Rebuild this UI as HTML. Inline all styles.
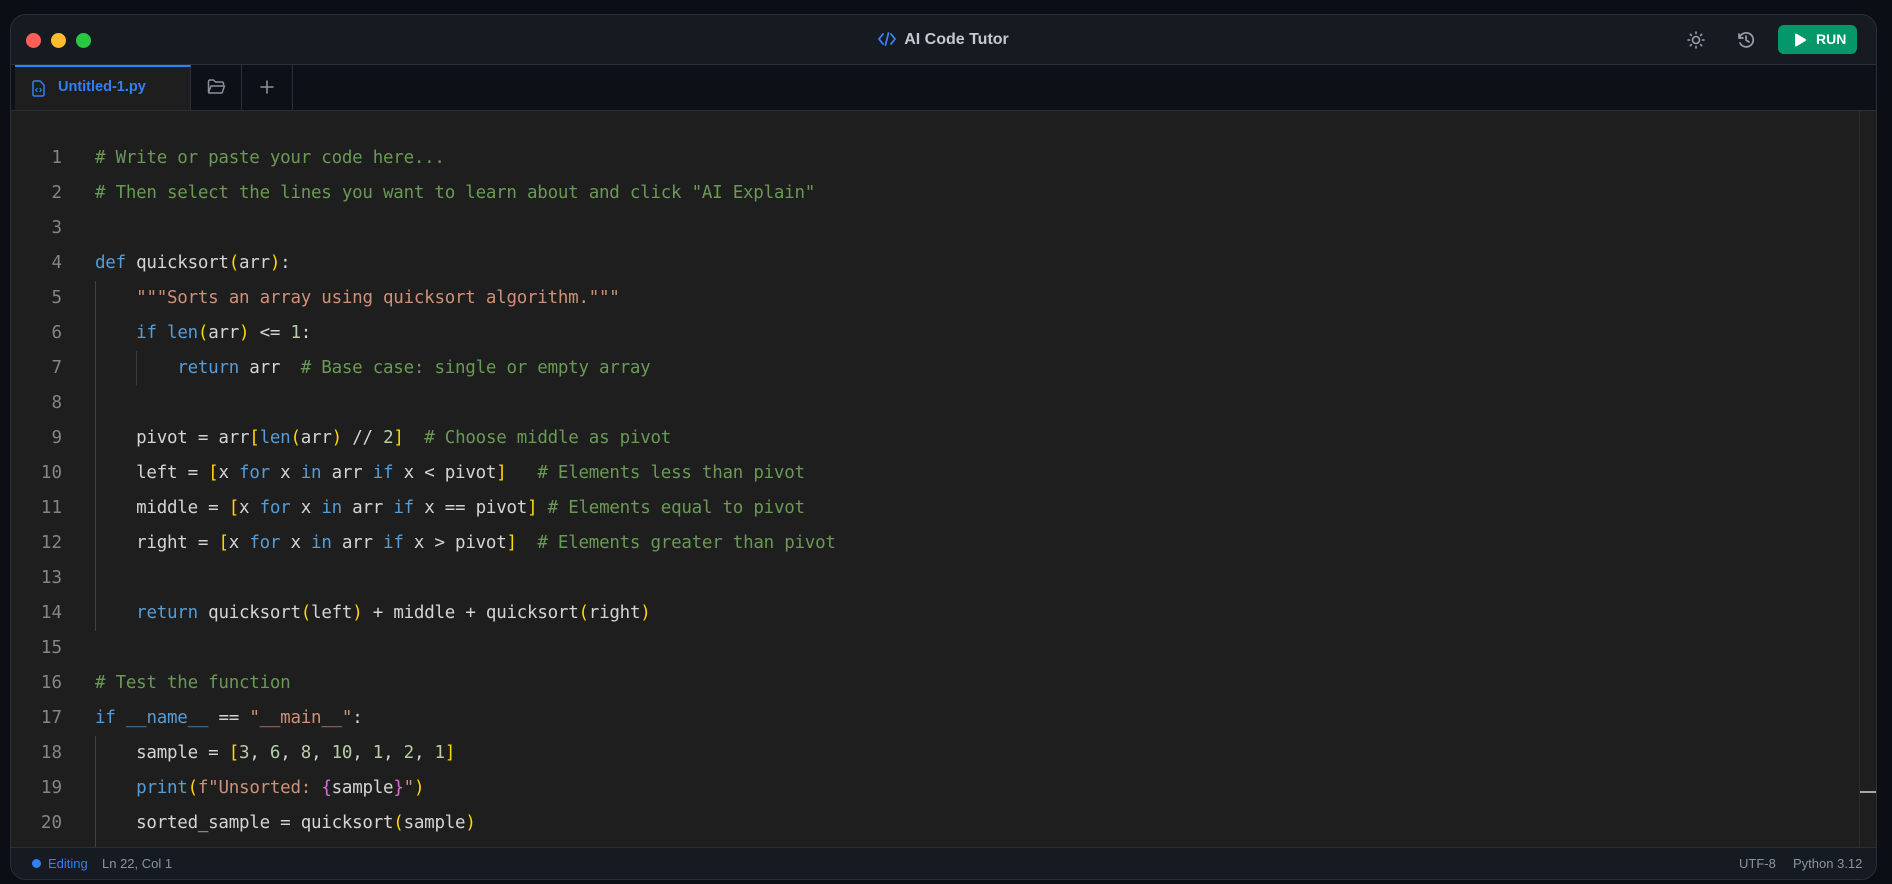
<!DOCTYPE html>
<html><head><meta charset="utf-8"><style>
*{margin:0;padding:0;box-sizing:border-box}
html,body{width:1892px;height:884px;background:#0b0e14;overflow:hidden;font-family:"Liberation Sans",sans-serif}
.win{position:absolute;left:10px;top:14px;width:1867px;height:866px;border:1px solid #2a3038;border-radius:16px;overflow:hidden;background:#161a21}
.title{position:absolute;left:0;top:0;right:0;height:50px;background:#161a21;border-bottom:1px solid #2a3038}
.dot{position:absolute;top:18px;width:15px;height:15px;border-radius:50%}
.tt{position:absolute;left:0;right:0;top:16px;text-align:center;color:#c4c9d0;font-weight:bold;font-size:16px}
.tabs{position:absolute;left:0;top:50px;right:0;height:46px;background:#0d1016;border-bottom:1px solid #2a3038}
.tab{position:absolute;top:0;height:45px;border-right:1px solid #2a3038}
.ed{position:absolute;left:0;top:96px;right:0;height:738px;background:#1e1e1e;overflow:hidden}
.ln{position:absolute;left:0;width:51px;text-align:right;color:#858585;font-family:"DejaVu Sans Mono","Liberation Mono",monospace;font-size:17.5px;line-height:35px}
.code{position:absolute;left:84px;font-family:"DejaVu Sans Mono","Liberation Mono",monospace;font-size:17.5px;line-height:35px;color:#d4d4d4;white-space:pre;letter-spacing:-0.25px}
.c{color:#6a9955}.k{color:#569cd6}.s{color:#ce9178}.b{color:#ffd700}.n{color:#b5cea8}.p{color:#da70d6}
.guide{position:absolute;width:1px;background:#404040}
.status{position:absolute;left:0;right:0;bottom:0;height:32px;background:#161a21;border-top:1px solid #2a3038;font-size:13px;color:#8b949e}
</style></head><body>
<div class="win">
 <div class="title">
  <div class="dot" style="left:15px;background:#fe5f57"></div>
  <div class="dot" style="left:40px;background:#febc2e"></div>
  <div class="dot" style="left:65px;background:#28c840"></div>
  <div class="tt"><svg width="18" height="14" viewBox="0 0 18 14" style="vertical-align:-2px;margin-right:8px"><path d="M5 2L1 7l4 5M13 2l4 5-4 5M10.5 1l-3 12" stroke="#3b82f6" stroke-width="1.8" fill="none" stroke-linecap="round" stroke-linejoin="round"/></svg>AI Code Tutor</div>
  <svg style="position:absolute;left:1675px;top:15px" width="20" height="20" viewBox="0 0 20 20" fill="none" stroke="#9aa0a8" stroke-width="1.6" stroke-linecap="round"><circle cx="10" cy="10" r="3.5"/><path d="M10 2v1.5M10 16.5V18M2 10h1.5M16.5 10H18M4.3 4.3l1.1 1.1M14.6 14.6l1.1 1.1M4.3 15.7l1.1-1.1M14.6 5.4l1.1-1.1"/></svg>
  <svg style="position:absolute;left:1725px;top:15px" width="20" height="20" viewBox="0 0 20 20" fill="none" stroke="#9aa0a8" stroke-width="1.7" stroke-linecap="round" stroke-linejoin="round"><path d="M3.5 8A7 7 0 1 1 4 13"/><path d="M3 4v4h4"/><path d="M10 6v4l3 2"/></svg>
  <div style="position:absolute;left:1767px;top:10px;width:79px;height:29px;background:#059669;border-radius:6px;color:#fff;font-weight:bold;font-size:14px;line-height:29px"><svg style="position:absolute;left:16px;top:8px" width="12" height="14" viewBox="0 0 12 14"><path d="M1 1.5v11a1 1 0 0 0 1.5.9l9-5.5a1 1 0 0 0 0-1.8l-9-5.5A1 1 0 0 0 1 1.5z" fill="#fff"/></svg><span style="position:absolute;left:38px">RUN</span></div>
 </div>
 <div class="tabs">
  <div class="tab" style="left:4px;width:176px;background:#1e1e1e;border-top:2px solid #2f81f7">
   <svg style="position:absolute;left:17px;top:13px" width="13" height="17" viewBox="0 0 13 17" fill="none" stroke="#2f81f7" stroke-width="1.5" stroke-linejoin="round"><path d="M1 2.5a1.5 1.5 0 0 1 1.5-1.5H8l4 4v9.5a1.5 1.5 0 0 1-1.5 1.5h-8A1.5 1.5 0 0 1 1 14.5z"/><path d="M5 8.5l-1.3 1.5L5 11.5M8 8.5l1.3 1.5L8 11.5" stroke-width="1.2" stroke-linecap="round"/></svg>
   <span style="position:absolute;left:43px;top:12px;color:#2f81f7;font-weight:bold;font-size:14.5px">Untitled-1.py</span>
  </div>
  <div class="tab" style="left:180px;width:51px"><svg style="position:absolute;left:16px;top:14px" width="19" height="16" viewBox="0 0 19 16" fill="none" stroke="#8b9098" stroke-width="1.5" stroke-linejoin="round"><path d="M1.5 13V2.5A1.5 1.5 0 0 1 3 1h3.5l2 2H15a1.5 1.5 0 0 1 1.5 1.5V6"/><path d="M1.5 13.5L4 7h13.5L15 14H2z"/></svg></div>
  <div class="tab" style="left:231px;width:51px"><svg style="position:absolute;left:18px;top:15px" width="14" height="14" viewBox="0 0 14 14" stroke="#8b9098" stroke-width="1.6" stroke-linecap="round"><path d="M7 1v12M1 7h12"/></svg></div>
 </div>
 <div class="ed">
  <div class="guide" style="left:84px;top:170px;height:350px"></div>
  <div class="guide" style="left:125px;top:240px;height:35px;background:#3a3a3a"></div>
  <div class="guide" style="left:84px;top:625px;height:120px"></div>
  <div style="position:absolute;left:1848px;top:0;bottom:0;width:1px;background:#2e2e2e"></div>
  <div style="position:absolute;left:1849px;top:680px;width:16px;height:2px;background:#a8a8a8"></div>
  <div class="ln" style="top:30px">1<br>2<br>3<br>4<br>5<br>6<br>7<br>8<br>9<br>10<br>11<br>12<br>13<br>14<br>15<br>16<br>17<br>18<br>19<br>20<br>21</div>
  <div class="code" style="top:30px"><span class="c"># Write or paste your code here...</span>
<span class="c"># Then select the lines you want to learn about and click "AI Explain"</span>

<span class="k">def</span> quicksort<span class="b">(</span>arr<span class="b">)</span>:
    <span class="s">"""Sorts an array using quicksort algorithm."""</span>
    <span class="k">if</span> <span class="k">len</span><span class="b">(</span>arr<span class="b">)</span> &lt;= <span class="n">1</span>:
        <span class="k">return</span> arr  <span class="c"># Base case: single or empty array</span>

    pivot = arr<span class="b">[</span><span class="k">len</span><span class="b">(</span>arr<span class="b">)</span> // <span class="n">2</span><span class="b">]</span>  <span class="c"># Choose middle as pivot</span>
    left = <span class="b">[</span>x <span class="k">for</span> x <span class="k">in</span> arr <span class="k">if</span> x &lt; pivot<span class="b">]</span>   <span class="c"># Elements less than pivot</span>
    middle = <span class="b">[</span>x <span class="k">for</span> x <span class="k">in</span> arr <span class="k">if</span> x == pivot<span class="b">]</span> <span class="c"># Elements equal to pivot</span>
    right = <span class="b">[</span>x <span class="k">for</span> x <span class="k">in</span> arr <span class="k">if</span> x &gt; pivot<span class="b">]</span>  <span class="c"># Elements greater than pivot</span>

    <span class="k">return</span> quicksort<span class="b">(</span>left<span class="b">)</span> + middle + quicksort<span class="b">(</span>right<span class="b">)</span>

<span class="c"># Test the function</span>
<span class="k">if</span> <span class="k">__name__</span> == <span class="s">"__main__"</span>:
    sample = <span class="b">[</span><span class="n">3</span>, <span class="n">6</span>, <span class="n">8</span>, <span class="n">10</span>, <span class="n">1</span>, <span class="n">2</span>, <span class="n">1</span><span class="b">]</span>
    <span class="k">print</span><span class="b">(</span><span class="s">f"Unsorted: </span><span class="p">{</span>sample<span class="p">}</span><span class="s">"</span><span class="b">)</span>
    sorted_sample = quicksort<span class="b">(</span>sample<span class="b">)</span>
</div>
 </div>
 <div class="status">
  <div style="position:absolute;left:21px;top:11px;width:9px;height:9px;border-radius:50%;background:#2f81f7"></div>
  <span style="position:absolute;left:37px;top:8px;color:#2f81f7">Editing</span>
  <span style="position:absolute;left:91px;top:8px">Ln 22, Col 1</span>
  <span style="position:absolute;left:1728px;top:8px">UTF-8</span>
  <span style="position:absolute;left:1782px;top:8px">Python 3.12</span>
 </div>
</div>
</body></html>
